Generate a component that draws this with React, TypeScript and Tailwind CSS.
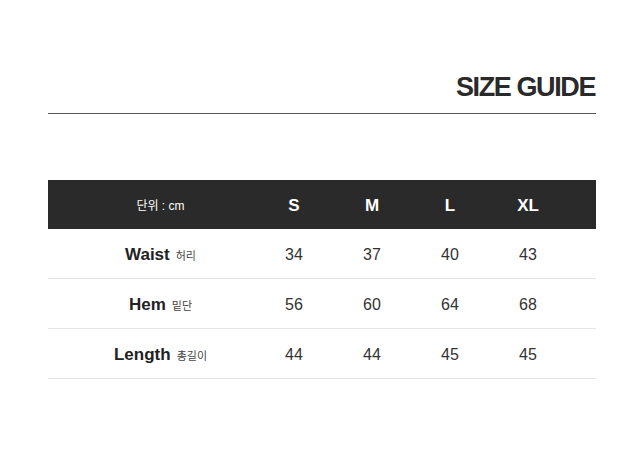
const sizes = ["S", "M", "L", "XL"]

const rows = [
  { en: "Waist", ko: "허리", values: [34, 37, 40, 43] },
  { en: "Hem", ko: "밑단", values: [56, 60, 64, 68] },
  { en: "Length", ko: "총길이", values: [44, 44, 45, 45] },
]

const font = { fontFamily: '"Liberation Sans", Arial, "Noto Sans CJK KR", sans-serif' }

export default function App() {
  return (
    <main className="w-[642px] h-[457px] bg-white text-[#222]" style={font}>
      <div className="ml-12 w-[548px] pt-[74px]">
        <h1 className="text-right text-[27px] leading-none font-bold tracking-[-1.4px] text-[#2a2a2a] pr-px">
          SIZE GUIDE
        </h1>
        <div className="mt-[12px] h-px bg-[#555]" />

        <div className="mt-[66px]">
          {/* header */}
          <div className="grid grid-cols-[207px_78px_78px_78px_78px_1fr] h-[49px] items-center bg-[#2a2a2a] text-white pt-[2px]">
            <div className="pl-[18px] text-center text-[12px]">단위 : cm</div>
            {sizes.map((s) => (
              <div key={s} className="text-center text-[17px] font-bold">
                {s}
              </div>
            ))}
            <div />
          </div>

          {rows.map((row) => (
            <div
              key={row.en}
              className="grid grid-cols-[207px_78px_78px_78px_78px_1fr] h-[50px] items-center border-b border-[#e4e4e4] pt-[3px]"
            >
              <div className="pl-[18px] text-center">
                <span className="text-[17px] font-bold text-[#222]">{row.en}</span>
                <span className="ml-[6px] text-[11px] text-[#444]">{row.ko}</span>
              </div>
              {row.values.map((v, i) => (
                <div key={i} className="text-center text-[16px] text-[#333]">
                  {v}
                </div>
              ))}
              <div />
            </div>
          ))}
        </div>
      </div>
    </main>
  )
}
